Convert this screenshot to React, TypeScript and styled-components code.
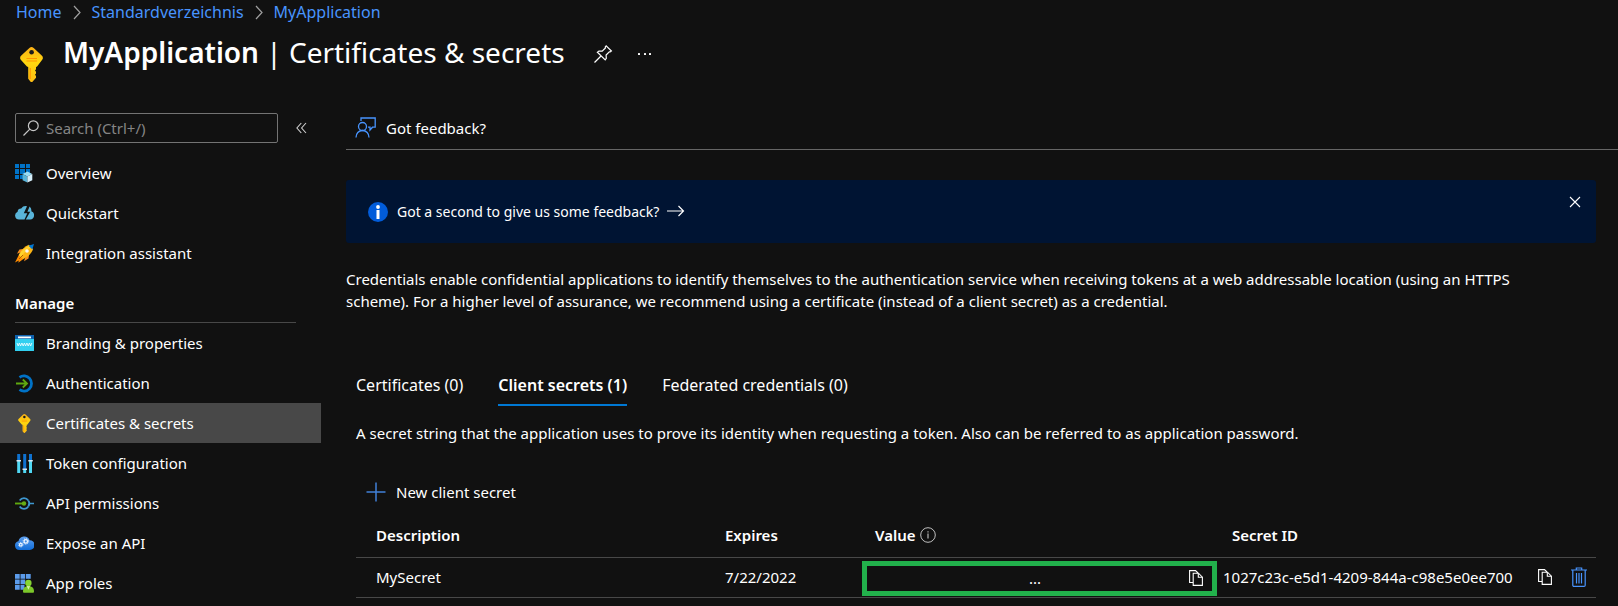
import React from "react";
import styled, { createGlobalStyle } from "styled-components";

const GlobalStyle = createGlobalStyle`
  * { box-sizing: border-box; }
  body {
    margin: 0;
    background: #111111;
    color: #ffffff;
    font-family: "Noto Sans", "Open Sans", sans-serif;
    font-size: 15px;
    line-height: 22px;
  }
  button, input { font: inherit; color: inherit; }
  svg { display: block; flex: none; }
`;

const Page = styled.div`
  min-width: 1240px;
`;

const Breadcrumb = styled.nav`
  display: flex;
  align-items: center;
  gap: 7px;
  height: 24px;
  padding-left: 16px;
  font-size: 16px;
`;

const Crumb = styled.a`
  color: #4894fe;
  text-decoration: none;
`;

const TitleBar = styled.header`
  display: flex;
  align-items: center;
  height: 60px;
  padding-left: 20px;
`;

const TitleIcon = styled.span`
  padding-top: 20px;
`;

const Title = styled.h1`
  margin: 0 28px 4px 20px;
  font-size: 28px;
  line-height: 36px;
  font-weight: 400;
  strong { font-weight: 600; }
`;

const IconButton = styled.button`
  display: flex;
  align-items: center;
  justify-content: center;
  padding: 0;
  border: 0;
  background: none;
  cursor: pointer;
`;

const TitleActions = styled.div`
  display: flex;
  align-items: center;
  gap: 24px;
`;

const Body = styled.div`
  display: flex;
  align-items: flex-start;
`;

const Sidebar = styled.aside`
  flex: none;
  width: 321px;
  padding-top: 29px;
`;

const SearchRow = styled.div`
  display: flex;
  align-items: center;
  gap: 18px;
  height: 30px;
  margin-bottom: 10px;
  padding-left: 15px;
`;

const SearchBox = styled.label`
  display: flex;
  align-items: center;
  gap: 7px;
  width: 263px;
  height: 30px;
  padding-left: 7px;
  border: 1px solid #747474;
  border-radius: 2px;
`;

const SearchInput = styled.input`
  flex: 1;
  min-width: 0;
  padding: 0;
  border: 0;
  outline: 0;
  background: none;
  &::placeholder { color: #858585; opacity: 1; }
`;

const NavList = styled.ul`
  margin: 0;
  padding: 0;
  list-style: none;
`;

const NavLink = styled.a<{ $active?: boolean }>`
  display: flex;
  align-items: center;
  gap: 12px;
  height: 40px;
  padding-left: 15px;
  color: #ffffff;
  text-decoration: none;
  background: ${(p) => (p.$active ? "#484848" : "transparent")};
`;

const NavHeading = styled.h2`
  margin: 19px 25px 0 15px;
  padding-bottom: 8px;
  border-bottom: 1px solid #484848;
  font-size: 15px;
  line-height: 22px;
  font-weight: 600;
`;

const Main = styled.main`
  flex: 1;
  min-width: 0;
  padding-left: 25px;
`;

const Toolbar = styled.div`
  display: flex;
  align-items: center;
  height: 66px;
  padding: 22px 0 0 9px;
  border-bottom: 1px solid #666666;
`;

const Command = styled.button`
  display: flex;
  align-items: center;
  gap: 10px;
  padding: 0;
  border: 0;
  background: none;
  cursor: pointer;
`;

const Content = styled.div`
  padding: 30px 22px 0 0;
`;

const Banner = styled.div`
  display: flex;
  align-items: center;
  gap: 9px;
  height: 63px;
  padding: 0 15px 0 22px;
  border-radius: 3px;
  background: #001433;
`;

const BannerLink = styled.a`
  display: flex;
  flex: 1;
  align-items: center;
  gap: 8px;
  color: #ffffff;
  text-decoration: none;
  font-size: 14px;
`;

const BannerClose = styled(IconButton)`
  align-self: flex-start;
  margin-top: 16px;
`;

const Intro = styled.p`
  margin: 25px 0 0;
  padding-right: 50px;
`;

const Secrets = styled.section`
  padding-left: 10px;
`;

const Tabs = styled.div`
  display: flex;
  gap: 35px;
  margin-top: 61px;
`;

const Tab = styled.button<{ $active?: boolean }>`
  height: 33px;
  padding: 0 0 7px;
  border: 0;
  border-bottom: 2px solid ${(p) => (p.$active ? "#0078d4" : "transparent")};
  background: none;
  font-size: 16px;
  line-height: 24px;
  font-weight: ${(p) => (p.$active ? 600 : 400)};
  cursor: pointer;
`;

const Hint = styled.p`
  margin: 16px 0 0;
`;

const CommandRow = styled.div`
  display: flex;
  margin: 37px 0 10px 10px;
`;

const Table = styled.table`
  width: 100%;
  table-layout: fixed;
  border-collapse: collapse;
`;

const Col = styled.col<{ $width?: number }>`
  width: ${(p) => (p.$width ? `${p.$width}px` : "auto")};
`;

const HeadCell = styled.th<{ $indent?: number }>`
  height: 44px;
  padding: 0 0 0 ${(p) => p.$indent ?? 0}px;
  border-bottom: 1px solid #484848;
  text-align: left;
  font-weight: 600;
`;

const Cell = styled.td<{ $indent?: number }>`
  height: 40px;
  padding: 0 0 0 ${(p) => p.$indent ?? 0}px;
  border-bottom: 1px solid #484848;
  white-space: nowrap;
`;

const Inline = styled.div<{ $gap: number }>`
  display: flex;
  align-items: center;
  gap: ${(p) => p.$gap}px;
`;

const ValueBox = styled.div`
  display: grid;
  grid-template-columns: 1fr auto;
  align-items: center;
  height: 35px;
  margin-top: 2px;
  padding: 0 9px 0 14px;
  border: 5px solid #22b14c;
  text-align: center;
`;

const KeyShape = () => (
  <>
    <path d="M9.4 1a3.2 3.2 0 0 1 4.3 0l8 7.6a3.2 3.2 0 0 1 .3 4.4l-4.7 6.2a2 2 0 0 1-1.3.8v2.3l-1 1.2 1 1.3v1.7l-1 1.3 1 1.3v1.7l-3.5 3.9a1.3 1.3 0 0 1-1.9 0L8.2 31.800V20a2 2 0 0 1-1.5-.8L1 13a3.2 3.2 0 0 1 .3-4.4z" fill="url(#keyGold)" />
    <circle cx="11.6" cy="5.3" r="2.3" fill="#1b1b1b" />
    <path d="M6.5 11.500h10.500M6.500 14h10.500" stroke="#ff9300" strokeWidth="1" />
    <path d="M10.2 21v11" stroke="#ff9300" strokeWidth="1.2" />
  </>
);

const KeyIcon = ({ width, height }: { width: number; height: number }) => (
  <svg width={width} height={height} viewBox="0 0 23 35">
    <defs>
      <linearGradient id="keyGold" x1="0" y1="0" x2="0" y2="1">
        <stop offset="0" stopColor="#fcb116" />
        <stop offset="0.45" stopColor="#ffd70f" />
        <stop offset="1" stopColor="#fcbc14" />
      </linearGradient>
    </defs>
    <KeyShape />
  </svg>
);

const ChevronIcon = () => (
  <svg width="16" height="16" viewBox="0 0 16 16" fill="none" stroke="#a0a0a0" strokeWidth="1.2">
    <path d="M5 2l6 6.500L5 15" />
  </svg>
);

const PinIcon = () => (
  <svg width="20" height="20" viewBox="0 0 20 20" fill="none" stroke="#ffffff" strokeWidth="1.2">
    <path d="M13.2 1.800l5.200 5.200-1.200.9-.9-.1-3.200 3.300.2 3.300-1.100 1.500L4.400 8.200l1.500-1.100 3.300.1L12.400 4l-.1-1z" />
    <path d="M8 12L1.500 18.500" />
  </svg>
);

const MoreIcon = () => (
  <svg width="16" height="4" viewBox="0 0 16 4" fill="#ffffff">
    <rect x="1" y="1" width="2" height="2" rx="0.5" />
    <rect x="7" y="1" width="2" height="2" rx="0.5" />
    <rect x="12" y="1" width="2" height="2" rx="0.5" />
  </svg>
);

const SearchIcon = () => (
  <svg width="16" height="16" viewBox="0 0 16 16" fill="none" stroke="#c8c8c8" strokeWidth="1.2">
    <circle cx="10.3" cy="5.7" r="4.9" />
    <path d="M6.800 9.200L.5 15.500" />
  </svg>
);

const CollapseIcon = () => (
  <svg width="11" height="12" viewBox="0 0 11 12" fill="none" stroke="#d0d0d0" strokeWidth="1.1">
    <path d="M5.300 1L.9 6l4.400 5M10 1L5.600 6 10 11" />
  </svg>
);

const OverviewIcon = () => (
  <svg width="19" height="19" viewBox="0 0 19 19">
    <g fill="#0072c6">
      <path d="M0 0h4v4H0zM5 0h5v4H5zM11 0h4v4h-4zM0 5h4v5H0zM5 5h5v5H5zM11 5h4v4h-4zM0 11h4v4H0zM5 11h4v4H5z" />
    </g>
    <path d="M12.400 7.600l4.900 2.300-4.900 2.500-4.800-2.500z" fill="#9adcf5" />
    <path d="M7.600 9.900l4.800 2.500v6.200l-4.800-2.400z" fill="#59b4d9" />
    <path d="M17.300 9.900l-4.900 2.500v6.200l4.900-2.400z" fill="#d5eefa" />
  </svg>
);

const QuickstartIcon = () => (
  <svg width="19" height="19" viewBox="0 0 19 19">
    <path d="M9.500 15.500H4a4 4 0 0 1-1.400-7.700A3.600 3.600 0 0 1 6.200 4.500 5.500 5.500 0 0 1 12 2.200L8.800 9.300h3.500z" fill="#59b4d9" />
    <path d="M10.800 15.500l4.400-7.800h-2.800l2.200-5.200a5 5 0 0 1 1.700 4.700 4.300 4.300 0 0 1-1 8.300z" fill="#59b4d9" />
  </svg>
);

const RocketIcon = () => (
  <svg width="19" height="19" viewBox="0 0 19 19">
    <path d="M5.300 8.600L2 9.800l2.400-4.200 5-.8zM10.300 13.600L9 17.200l4.500-2.700.8-5z" fill="#f78d1e" />
    <path d="M4.300 10L0 18.500l3.800-2-.5 2.200 5.400-4z" fill="#ff8c00" />
    <path d="M3.800 11c2.500-5.500 6-8.800 10-10.300l4.300 4.200c-1.500 4.200-4.800 7.700-10.100 10.300z" fill="#fdb515" />
    <path d="M3.800 11C7 6 10.500 3 15 1.500l1.500 1.700C12.500 5 9 8.500 6 13z" fill="#ffd22e" />
    <path d="M13.500 1.700L19 0l-1.700 5.500z" fill="#0078d4" />
    <circle cx="12" cy="7" r="1.8" fill="#f4f4f4" />
    <path d="M4 15l4-4" stroke="#a85600" strokeWidth="0.9" />
  </svg>
);

const BrandingIcon = () => (
  <svg width="19" height="16" viewBox="0 0 19 16">
    <rect width="19" height="16" rx="0.6" fill="#32d0f0" />
    <path d="M0 0h19v4H0z" fill="#0f62ae" />
    <path d="M3 1.500h13v1.800H3z" fill="#ffffff" />
    <path d="M2 8l1.200 3 1.200-3 1.200 3L6.800 8M7 8l1.200 3 1.200-3 1.200 3 1.200-3M12 8l1.200 3 1.200-3 1.200 3 1.200-3" fill="none" stroke="#e8fbff" strokeWidth="0.9" />
  </svg>
);

const AuthenticationIcon = () => (
  <svg width="19" height="19" viewBox="0 0 19 19" fill="none">
    <path d="M4.500 3.300a7.600 7.600 0 1 1 0 12.400" stroke="#0072c6" strokeWidth="2.8" />
    <path d="M1 9.500h10M7.800 5.500l4.200 4-4.200 4" stroke="#5fa810" strokeWidth="1.8" />
  </svg>
);

const TokenIcon = () => (
  <svg width="19" height="19" viewBox="0 0 19 19">
    <path d="M2.200 0h3v7h-3zM8.200 0h3v15h-3zM14 0h3v7h-3z" fill="#0f72d0" />
    <path d="M2.200 7h3v12h-3zM8.200 16h3v3h-3zM14 7h3v12h-3z" fill="#50d8f4" />
    <path d="M1.500 6h4.500v1.500H1.500zM7.500 14.500H12V16H7.500zM13.300 6h4.500v1.500h-4.500z" fill="#d8e8f4" />
  </svg>
);

const PermissionsIcon = () => (
  <svg width="19" height="19" viewBox="0 0 19 19" fill="none">
    <path d="M4.700 6.500a5 5 0 0 1 8.600 0M4.700 12.500a5 5 0 0 0 8.600 0" stroke="#3e97cf" strokeWidth="1.7" />
    <path d="M13.300 6.500a5 5 0 0 1 0 6M14 9.500h5" stroke="#3e97cf" strokeWidth="1.7" />
    <path d="M0 9.500h9" stroke="#5fa810" strokeWidth="1.9" />
    <circle cx="9" cy="9.5" r="2.2" fill="#66ad14" />
  </svg>
);

const ExposeIcon = () => (
  <svg width="19" height="19" viewBox="0 0 19 19">
    <defs>
      <linearGradient id="cloudBlue" x1="0" y1="0" x2="0" y2="1">
        <stop offset="0" stopColor="#5ea0ef" />
        <stop offset="1" stopColor="#0f6cd8" />
      </linearGradient>
    </defs>
    <path d="M4.500 16A4.400 4.400 0 0 1 3.500 7.300 5.800 5.800 0 0 1 14.600 6.200 4.900 4.900 0 0 1 14.800 16z" fill="url(#cloudBlue)" />
    <g fill="none" stroke="#eef6ff">
      <circle cx="10.8" cy="7.4" r="1.7" strokeWidth="1.3" />
      <circle cx="10.8" cy="7.4" r="2.7" strokeWidth="1" strokeDasharray="1.06 1.06" />
      <circle cx="5.8" cy="10.7" r="1.3" strokeWidth="1.2" />
      <circle cx="5.8" cy="10.7" r="2.2" strokeWidth="0.9" strokeDasharray="0.86 0.86" />
    </g>
  </svg>
);

const RolesIcon = () => (
  <svg width="19" height="19" viewBox="0 0 19 19">
    <path d="M0 0h4.700v4.700H0zM5.500 0h4.700v4.700H5.500zM11 0h4.700v4.700H11zM0 5.500h4.700v4.700H0zM5.500 5.500h4.700v4.700H5.500zM0 11h4.700v4.700H0zM5.500 11h4v4.700h-4z" fill="#5b9bea" />
    <path d="M8 17.700c0-3.500 1.500-5.700 5.400-5.700s5.600 2.200 5.600 5.700a1 1 0 0 1-1 1H9a1 1 0 0 1-1-1z" fill="#7cc72a" />
    <path d="M11.700 12l1.700 3.800 1.700-3.800z" fill="#d6f0a8" />
    <circle cx="13.4" cy="9" r="3.2" fill="#86d633" />
  </svg>
);

const FeedbackIcon = () => (
  <svg width="21" height="21" viewBox="0 0 21 21" fill="none" stroke="#4894fe" strokeWidth="1.3">
    <circle cx="7.5" cy="9.5" r="4" />
    <path d="M1 20.500c0-4 2.600-7 6.500-7s6.500 3 6.500 7" />
    <path d="M6 4V1h14.200v9.200h-2.700L15 13v-2.800h-2" />
  </svg>
);

const InfoIcon = () => (
  <svg width="20" height="20" viewBox="0 0 20 20">
    <circle cx="10" cy="10" r="10" fill="#015cda" />
    <rect x="8.5" y="8" width="3" height="9" fill="#ffffff" />
    <circle cx="10" cy="5" r="1.9" fill="#ffffff" />
  </svg>
);

const ArrowIcon = () => (
  <svg width="18" height="14" viewBox="0 0 18 14" fill="none" stroke="#ffffff" strokeWidth="1.2">
    <path d="M0 6h16.500M11.500 1l5 5-5 5" />
  </svg>
);

const CloseIcon = () => (
  <svg width="12" height="12" viewBox="0 0 12 12" fill="none" stroke="#ffffff" strokeWidth="1.1">
    <path d="M1 1l10 10M11 1L1 11" />
  </svg>
);

const PlusIcon = () => (
  <svg width="20" height="20" viewBox="0 0 20 20" fill="none" stroke="#4080d8" strokeWidth="1.5">
    <path d="M10 .5v19M.5 10h19" />
  </svg>
);

const SmallInfoIcon = () => (
  <svg width="16" height="16" viewBox="0 0 16 16">
    <circle cx="8" cy="8" r="7.3" fill="none" stroke="#c0c0c0" />
    <path d="M7.500 6.500h1v5h-1zM7.500 4.300h1v1.200h-1z" fill="#d8d8d8" />
  </svg>
);

const CopyIcon = () => (
  <svg width="14" height="16" viewBox="0 0 14 16" fill="none" stroke="#ffffff" strokeWidth="1.1">
    <path d="M4 12.500H.6V.6h5.900L9 3" />
    <path d="M4.200 3.200h5.300l3.900 4v8.200H4.200z" />
    <path d="M9.300 3.200v4h4" />
  </svg>
);

const TrashIcon = () => (
  <svg width="16" height="20" viewBox="0 0 16 20" fill="none" stroke="#4894fe" strokeWidth="1.2">
    <path d="M0 3h16M5.300 3V1h5.400v2" />
    <path d="M1.800 3v15.200a1.200 1.200 0 0 0 1.200 1.200h10a1.200 1.200 0 0 0 1.200-1.200V3" />
    <path d="M5.500 6v10.500M8 6v10.500M10.500 6v10.500" />
  </svg>
);

const NavKeyIcon = () => (
  <svg width="19" height="19" viewBox="-5.7 0 35 35">
    <KeyShape />
  </svg>
);

type Item = { label: string; icon: React.ReactNode; active?: boolean };

const topItems: Item[] = [
  { label: "Overview", icon: <OverviewIcon /> },
  { label: "Quickstart", icon: <QuickstartIcon /> },
  { label: "Integration assistant", icon: <RocketIcon /> },
];

const manageItems: Item[] = [
  { label: "Branding & properties", icon: <BrandingIcon /> },
  { label: "Authentication", icon: <AuthenticationIcon /> },
  { label: "Certificates & secrets", icon: <NavKeyIcon />, active: true },
  { label: "Token configuration", icon: <TokenIcon /> },
  { label: "API permissions", icon: <PermissionsIcon /> },
  { label: "Expose an API", icon: <ExposeIcon /> },
  { label: "App roles", icon: <RolesIcon /> },
];

const Nav = ({ items }: { items: Item[] }) => (
  <NavList>
    {items.map((item) => (
      <li key={item.label}>
        <NavLink href="#" $active={item.active} aria-current={item.active ? "page" : undefined}>
          {item.icon}
          {item.label}
        </NavLink>
      </li>
    ))}
  </NavList>
);

export default function App() {
  return (
    <Page>
      <GlobalStyle />
      <Breadcrumb aria-label="Breadcrumb">
        <Crumb href="#">Home</Crumb>
        <ChevronIcon />
        <Crumb href="#">Standardverzeichnis</Crumb>
        <ChevronIcon />
        <Crumb href="#">MyApplication</Crumb>
      </Breadcrumb>
      <TitleBar>
        <TitleIcon><KeyIcon width={23} height={35} /></TitleIcon>
        <Title>
          <strong>MyApplication</strong> | Certificates &amp; secrets
        </Title>
        <TitleActions>
          <IconButton aria-label="Pin"><PinIcon /></IconButton>
          <IconButton aria-label="More"><MoreIcon /></IconButton>
        </TitleActions>
      </TitleBar>
      <Body>
        <Sidebar>
          <SearchRow>
            <SearchBox>
              <SearchIcon />
              <SearchInput type="text" placeholder="Search (Ctrl+/)" aria-label="Search" />
            </SearchBox>
            <IconButton aria-label="Collapse menu"><CollapseIcon /></IconButton>
          </SearchRow>
          <Nav items={topItems} />
          <NavHeading>Manage</NavHeading>
          <Nav items={manageItems} />
        </Sidebar>
        <Main>
          <Toolbar>
            <Command><FeedbackIcon />Got feedback?</Command>
          </Toolbar>
          <Content>
            <Banner>
              <InfoIcon />
              <BannerLink href="#">Got a second to give us some feedback?<ArrowIcon /></BannerLink>
              <BannerClose aria-label="Close"><CloseIcon /></BannerClose>
            </Banner>
            <Intro>
              Credentials enable confidential applications to identify themselves to the authentication service when
              receiving tokens at a web addressable location (using an HTTPS scheme). For a higher level of assurance,
              we recommend using a certificate (instead of a client secret) as a credential.
            </Intro>
            <Secrets>
              <Tabs role="tablist">
                <Tab role="tab">Certificates (0)</Tab>
                <Tab role="tab" $active aria-selected>Client secrets (1)</Tab>
                <Tab role="tab">Federated credentials (0)</Tab>
              </Tabs>
              <Hint>
                A secret string that the application uses to prove its identity when requesting a token. Also can be
                referred to as application password.
              </Hint>
              <CommandRow>
                <Command><PlusIcon />New client secret</Command>
              </CommandRow>
              <Table>
                <colgroup>
                  <Col />
                  <Col $width={137} />
                  <Col $width={355} />
                  <Col $width={354} />
                  <Col $width={25} />
                </colgroup>
                <thead>
                  <tr>
                    <HeadCell $indent={20}>Description</HeadCell>
                    <HeadCell>Expires</HeadCell>
                    <HeadCell $indent={13}>
                      <Inline $gap={4}>Value<SmallInfoIcon /></Inline>
                    </HeadCell>
                    <HeadCell $indent={15} colSpan={2}>Secret ID</HeadCell>
                  </tr>
                </thead>
                <tbody>
                  <tr>
                    <Cell $indent={20}>MySecret</Cell>
                    <Cell>7/22/2022</Cell>
                    <Cell>
                      <ValueBox>
                        <span>...</span>
                        <IconButton aria-label="Copy value"><CopyIcon /></IconButton>
                      </ValueBox>
                    </Cell>
                    <Cell $indent={6}>
                      <Inline $gap={25}>
                        1027c23c-e5d1-4209-844a-c98e5e0ee700
                        <IconButton aria-label="Copy secret ID"><CopyIcon /></IconButton>
                      </Inline>
                    </Cell>
                    <Cell>
                      <IconButton aria-label="Delete"><TrashIcon /></IconButton>
                    </Cell>
                  </tr>
                </tbody>
              </Table>
            </Secrets>
          </Content>
        </Main>
      </Body>
    </Page>
  );
}
